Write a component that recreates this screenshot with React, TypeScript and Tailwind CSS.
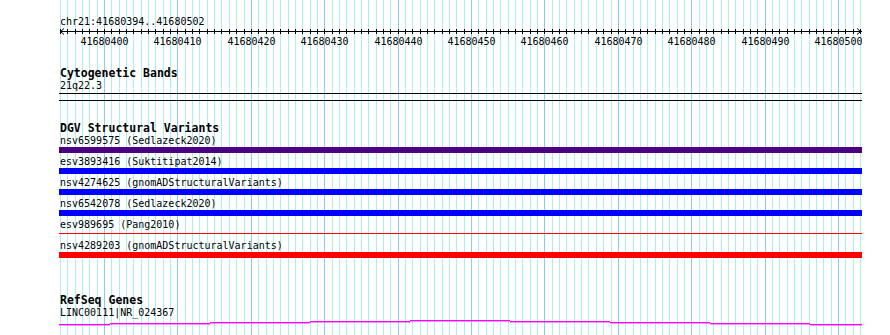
import React from "react";

const START = 41680394;
const PX = 7.34;
const X0 = 60;
const TRACK_LEFT = 59;

const bpLines = Array.from({ length: 110 }, (_, k) => ({
  x: Math.round(X0 + k * PX) + 0.5,
  major: (START + k) % 10 === 0,
  pos: START + k,
}));

const features = [
  { label: "nsv6599575 (Sedlazeck2020)", color: "#4b0082", kind: "bar" },
  { label: "esv3893416 (Suktitipat2014)", color: "#0000ff", kind: "bar" },
  { label: "nsv4274625 (gnomADStructuralVariants)", color: "#0000ff", kind: "bar" },
  { label: "nsv6542078 (Sedlazeck2020)", color: "#0000ff", kind: "bar" },
  { label: "esv989695 (Pang2010)", color: "#ff0000", kind: "line" },
  { label: "nsv4289203 (gnomADStructuralVariants)", color: "#ff0000", kind: "bar" },
];

const geneSegs: [number, number, number][] = [
  [59, 110, 324],
  [110, 210, 323],
  [210, 310, 322],
  [310, 410, 321],
  [410, 510, 320],
  [510, 610, 321],
  [610, 710, 322],
  [710, 810, 323],
  [810, 862, 324],
];

const mono = "font-['DejaVu_Sans_Mono','Liberation_Mono',monospace]";

function Ruler() {
  const w = 803;
  return (
    <svg width={w} height={20} className="block" shapeRendering="crispEdges">
      <line x1={1} y1={4.5} x2={w} y2={4.5} stroke="#000" strokeWidth={1} />
      {bpLines.map((l) => (
        <line key={l.pos} x1={l.x - TRACK_LEFT} y1={2} x2={l.x - TRACK_LEFT} y2={7} stroke="#000" strokeWidth={1} />
      ))}
      <polyline points="5,1.5 1.5,4.5 5,7.5" fill="none" stroke="#000" strokeWidth={1} shapeRendering="auto" />
      <polyline points={`${w - 5},1.5 ${w - 1.5},4.5 ${w - 5},7.5`} fill="none" stroke="#000" strokeWidth={1} shapeRendering="auto" />
      {bpLines
        .filter((l) => l.major)
        .map((l) => (
          <text
            key={l.pos}
            x={l.x - TRACK_LEFT}
            y={17.5}
            textAnchor="middle"
            fontSize={10}
            fontFamily="'DejaVu Sans Mono','Liberation Mono',monospace"
            fill="#000"
          >
            {l.pos}
          </text>
        ))}
    </svg>
  );
}

export default function App() {
  return (
    <div className="relative w-[890px] h-[335px] bg-white overflow-hidden text-black">
      <svg className="absolute left-0 top-0 pointer-events-none" width={890} height={335} shapeRendering="crispEdges">
        {bpLines.map((l) => (
          <line
            key={l.pos}
            x1={l.x}
            y1={0}
            x2={l.x}
            y2={335}
            stroke={l.major ? "#8ccbee" : "#aeeeee"}
            strokeWidth={1}
          />
        ))}
      </svg>

      <div className={`relative ml-[59px] w-[803px] ${mono}`}>
        <div className="h-[16px]" />
        <div className="h-[11px] leading-[12px] text-[10px] pl-px whitespace-nowrap">chr21:41680394..41680502</div>
        <Ruler />
        <div className="h-[20px]" />

        <div className="h-[13px] leading-[13px] text-[11.5px] font-bold pl-px whitespace-nowrap">Cytogenetic Bands</div>
        <div className="h-[13px] leading-[12px] text-[10px] pl-px whitespace-nowrap">21q22.3</div>
        <div className="h-px bg-black" />
        <div className="h-[6px]" />
        <div className="h-px bg-black" />
        <div className="h-[21px]" />

        <div className="h-[12px] leading-[13px] text-[11.5px] font-bold pl-px whitespace-nowrap">DGV Structural Variants</div>
        {features.map((f) => (
          <div key={f.label} className="flex flex-col h-[21px]">
            <div className="h-[13px] pt-px leading-[12px] text-[10px] pl-px whitespace-nowrap">{f.label}</div>
            {f.kind === "bar" ? (
              <div className="h-[6px] w-full" style={{ backgroundColor: f.color }} />
            ) : (
              <div className="h-[6px] flex flex-col">
                <div className="h-[2px]" />
                <div className="h-px w-full" style={{ backgroundColor: f.color }} />
              </div>
            )}
          </div>
        ))}
        <div className="h-[35px]" />

        <div className="h-[12px] leading-[11px] text-[11.5px] font-bold pl-px whitespace-nowrap">RefSeq Genes</div>
        <div className="h-[12px] leading-[12px] text-[10px] pl-px whitespace-nowrap">LINC00111|NR_024367</div>
        <svg width={803} height={10} className="block">
          {geneSegs.map(([a, b, y]) => (
            <rect key={a} x={a - TRACK_LEFT} y={y - 319} width={b - a} height={1.4} fill="#ff00ff" />
          ))}
        </svg>
      </div>
    </div>
  );
}
